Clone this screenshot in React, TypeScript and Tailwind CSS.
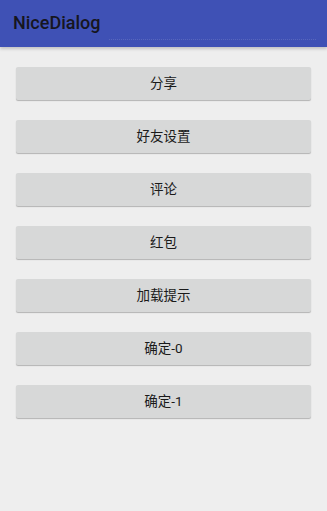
import React from "react";

const items = ["分享", "好友设置", "评论", "红包", "加载提示", "确定-0", "确定-1"];

export default function App() {
  return (
    <div
      className="w-[327px] h-[511px] bg-[#eeeeee] flex flex-col"
      style={{ fontFamily: 'Roboto, "Noto Sans CJK SC", sans-serif' }}
    >
      <div className="relative h-[47px] bg-[#3f51b5] flex items-center pl-[13px] shadow-[0_2px_3px_rgba(0,0,0,0.18)] z-10">
        <span className="text-[18px] font-medium text-[#16161e] leading-none -mt-[1px]">NiceDialog</span>
        <div className="absolute left-[109px] right-[11px] top-[39px] border-t border-dotted border-[#6f7cc6] opacity-50" />
      </div>
      <div className="flex flex-col gap-[20px] px-[16px] pt-[20px]">
        {items.map((t) => (
          <div
            key={t}
            className="h-[33px] rounded-[2px] bg-[#d7d8d8] shadow-[0_1px_1px_rgba(0,0,0,0.25)] flex items-center justify-center text-[13.5px] text-[#1a1a1a]"
          >
            {t}
          </div>
        ))}
      </div>
    </div>
  );
}
